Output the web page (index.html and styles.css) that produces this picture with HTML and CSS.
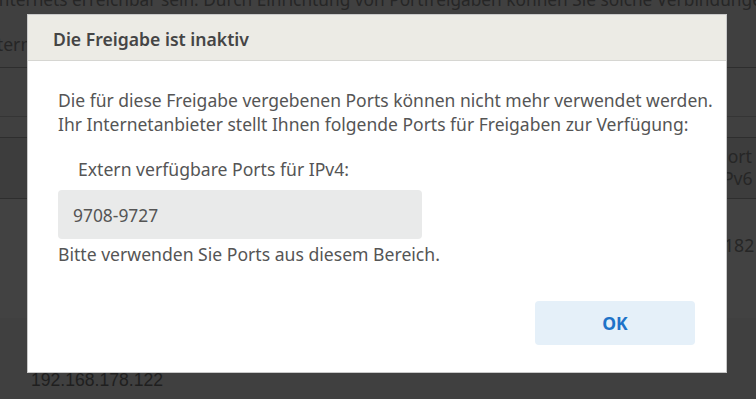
FILE: index.html
```html
<!DOCTYPE html>
<html lang="de">
<head>
<meta charset="utf-8">
<link rel="stylesheet" href="styles.css">
</head>
<body>
<div class="page">
  <p class="intro">Internets erreichbar sein. Durch Einrichtung von Portfreigaben können Sie solche Verbindungen zulassen.</p>
  <div class="thead-top"><span class="cut">Intern</span></div>
  <div class="row-a"></div>
  <div class="row-thin"></div>
  <div class="row-head">
    <div class="rh-right"><span>Port an</span><span>IPv6</span></div>
  </div>
  <div class="row-data"><span class="rd-right">182</span></div>
  <div class="row-b"><span class="ip">192.168.178.122</span></div>
</div>

<div class="dialog">
  <div class="dlg-head">Die Freigabe ist inaktiv</div>
  <div class="dlg-body">
    <p class="msg">Die für diese Freigabe vergebenen Ports können nicht mehr verwendet werden.<br>Ihr Internetanbieter stellt Ihnen folgende Ports für Freigaben zur Verfügung:</p>
    <div class="label">Extern verfügbare Ports für IPv4:</div>
    <div class="field">9708-9727</div>
    <p class="hint">Bitte verwenden Sie Ports aus diesem Bereich.</p>
    <div class="actions"><button class="ok">OK</button></div>
  </div>
</div>
</body>
</html>
```

FILE: styles.css
```css
html, body {
  margin: 0;
  padding: 0;
  height: 100%;
  overflow: hidden;
}
body {
  background: #404040;
  font-family: "Noto Sans", "Open Sans", sans-serif;
  position: relative;
}
.page {
  color: #262626;
  font-size: 17.6px;
}
.intro {
  margin: -12px 0 0 -7px;
  white-space: nowrap;
  line-height: 24px;
  font-size: 17.3px;
}
.thead-top {
  height: 55px;
  border-bottom: 1px solid #2e2e2e;
  display: flex;
  align-items: center;
}
.cut {
  margin-left: -20px;
  margin-top: 8px;
}
.row-a {
  height: 48px;
  border-bottom: 1px solid #353535;
}
.row-thin {
  height: 20px;
  border-bottom: 1px solid #2e2e2e;
}
.row-head {
  height: 60px;
  background: #3d3d3d;
  border-bottom: 1px solid #2e2e2e;
}
.rh-right {
  display: flex;
  flex-direction: column;
  padding-left: 717px;
  padding-top: 7px;
  line-height: 22px;
  white-space: nowrap;
}
.row-data {
  height: 119px;
  background: #424242;
  padding-left: 724px;
  box-sizing: border-box;
  padding-top: 34px;
}
.row-b {
  padding-left: 31px;
  padding-top: 52px;
  font-family: "Liberation Sans", sans-serif;
  color: #1f1f1f;
}

.dialog {
  position: absolute;
  left: 27px;
  top: 14px;
  width: 698px;
  height: 357px;
  background: #fff;
  border: 1px solid #c9c9c9;
  display: flex;
  flex-direction: column;
}
.dlg-head {
  background: #ecebe5;
  border-bottom: 1px solid #d6d6d2;
  color: #454545;
  font-weight: 600;
  font-size: 17.6px;
  padding-left: 25px;
  display: flex;
  align-items: center;
  padding-top: 2px;
  box-sizing: border-box;
  height: 46px;
}
.dlg-body {
  padding: 27px 30px 0 30px;
  color: #555;
  font-size: 17.6px;
}
.msg {
  margin: 0;
  line-height: 24px;
  white-space: nowrap;
  font-size: 17.5px;
}
.label {
  margin: 21px 0 0 20px;
  line-height: 24px;
}
.field {
  margin-top: 9px;
  width: 364px;
  height: 49px;
  box-sizing: border-box;
  background: #e9eaea;
  border-radius: 4px;
  padding-left: 15px;
  display: flex;
  align-items: center;
  font-size: 17.4px;
}
.hint {
  margin: 3px 0 0 0;
  line-height: 24px;
  font-size: 17.6px;
}
.actions {
  display: flex;
  justify-content: flex-end;
  margin-top: 35px;
  padding-right: 1px;
}
.ok {
  width: 160px;
  height: 44px;
  border: none;
  border-radius: 4px;
  background: #e5f0f9;
  color: #1e73c8;
  font-family: "Noto Sans", "Open Sans", sans-serif;
  font-weight: 700;
  font-size: 17.5px;
}
```
